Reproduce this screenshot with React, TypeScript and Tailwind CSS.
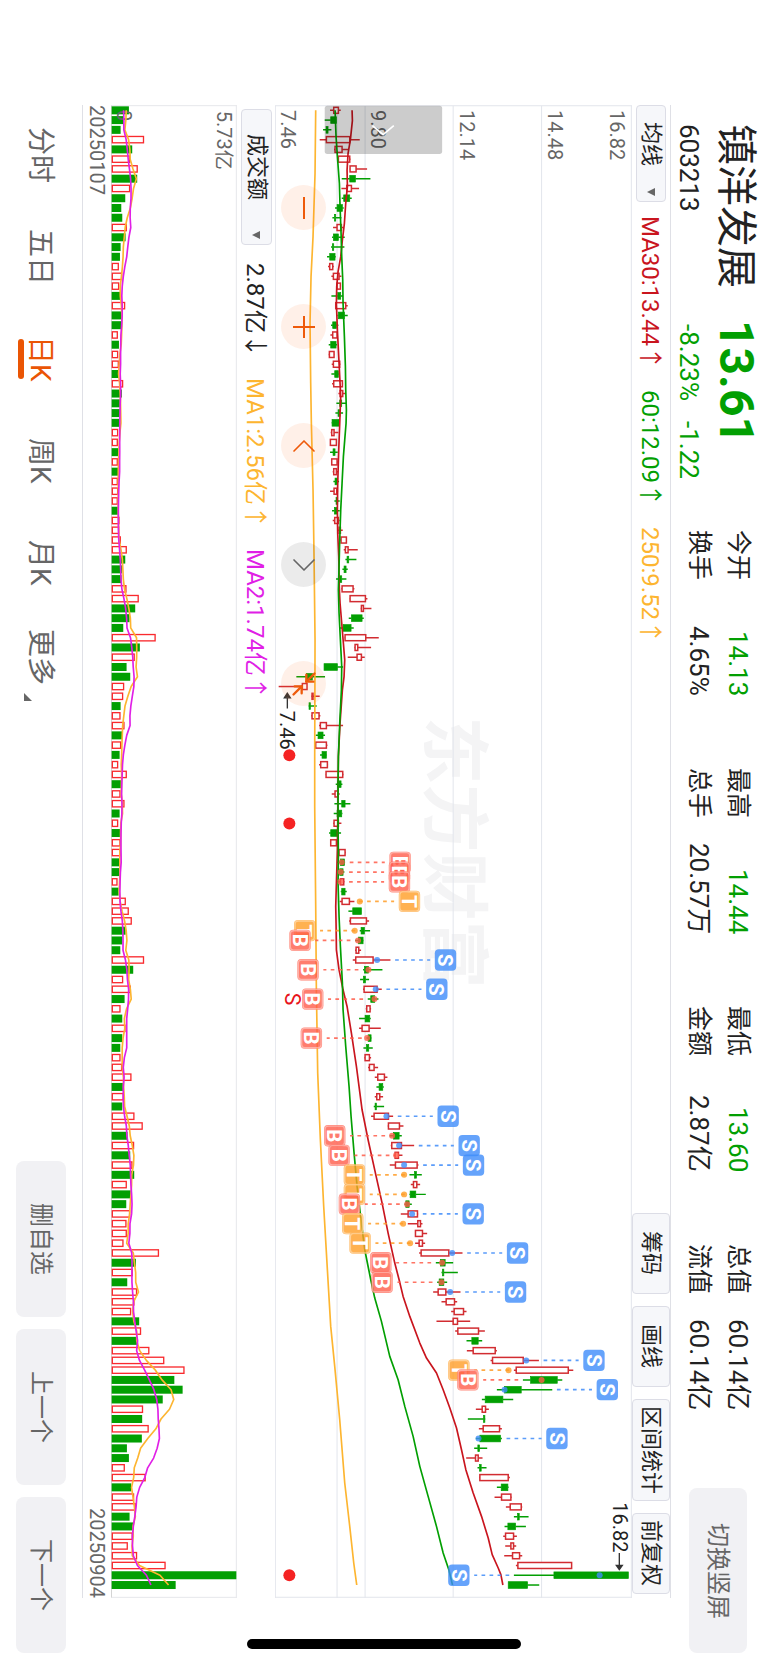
import { useState } from 'react';
import { ChevronDown, ChevronUp, Minimize2 } from 'lucide-react';

type Side = 'B' | 'S' | 'T';

// low, body start, body end, high - negative low marks a falling day
type Candle = [number, number, number, number];

const UP = '#d22c31';
const DOWN = '#029f02';
const ORANGE = '#fdb530';
const MAGENTA = '#e01fe6';

const PITCH = 29.305;
const rowAt = (i: number) => 61 + PITCH * i;

const CANDLES: Candle[] = [
  [211, 222, 236, 243], [-195, 213, 230, 230], [-190, 199, 205, 215], [180, 200, 270, 300],
  [223, 226, 247, 267], [235, 236, 270, 272], [270, 271, 289, 322], [-246, 270, 287, 332],
  [245, 261, 275, 298], [-246, 252, 270, 276], [-226, 232, 248, 252], [-218, 224, 228, 245],
  [220, 232, 245, 250], [-217, 221, 236, 255], [-214, 218, 222, 254], [-202, 210, 226, 228],
  [205, 210, 219, 222], [215, 221, 238, 245], [230, 232, 242, 244], [-215, 234, 243, 250],
  [226, 228, 258, 264], [-233, 236, 254, 264], [-214, 219, 230, 236], [212, 219, 232, 234],
  [-207, 213, 229, 232], [207, 209, 223, 224], [216, 221, 240, 242], [-215, 225, 236, 240],
  [217, 222, 248, 250], [236, 241, 249, 258], [-230, 240, 246, 260], [-227, 235, 241, 250],
  [-216, 217, 238, 239], [213, 216, 223, 236], [211, 212, 230, 231], [-211, 220, 226, 234],
  [214, 216, 232, 234], [219, 222, 230, 235], [-221, 226, 234, 238], [211, 223, 231, 235],
  [-224, 229, 234, 240], [-217, 224, 232, 240], [219, 225, 236, 240], [234, 238, 242, 249],
  [240, 244, 260, 261], [252, 257, 265, 294], [-257, 262, 267, 290], [-248, 253, 259, 264],
  [-229, 240, 246, 260], [245, 247, 280, 284], [270, 271, 317, 323], [303, 305, 311, 335],
  [-267, 275, 307, 312], [-240, 250, 274, 282], [255, 256, 318, 357], [284, 286, 294, 334],
  [264, 292, 305, 315], [-193, 193, 233, 250], [-110, 140, 158, 196], [57, 128, 142, 142],
  [155, 157, 160, 180], [-147, 148, 152, 171], [155, 157, 178, 182], [178, 182, 200, 250],
  [-168, 175, 190, 196], [167, 168, 200, 203], [-181, 187, 200, 201], [178, 183, 203, 205],
  [198, 199, 249, 251], [-228, 234, 244, 248], [216, 226, 234, 240], [-224, 246, 256, 272],
  [-222, 232, 246, 248], [221, 223, 236, 245], [-208, 213, 232, 244], [211, 213, 230, 232],
  [236, 238, 256, 258], [-232, 242, 254, 256], [-235, 240, 250, 254], [232, 242, 252, 254],
  [-243, 246, 256, 261], [240, 247, 269, 284], [-266, 279, 305, 305], [268, 272, 320, 328],
  [-300, 304, 314, 331], [-286, 296, 310, 311], [286, 289, 297, 304], [279, 288, 340, 392],
  [-310, 314, 326, 368], [-301, 311, 317, 328], [310, 313, 352, 366], [-324, 333, 345, 356],
  [318, 321, 331, 334], [-298, 316, 330, 333], [298, 307, 328, 363], [-320, 325, 334, 335],
  [-311, 320, 327, 339], [314, 316, 329, 334], [325, 329, 343, 355], [345, 354, 374, 383],
  [-350, 358, 369, 372], [345, 351, 360, 370], [-342, 346, 350, 373], [334, 343, 386, 400],
  [384, 386, 419, 431], [-390, 401, 418, 426], [393, 396, 425, 463], [403, 406, 416, 428],
  [390, 407, 472, 476], [-449, 464, 470, 486], [453, 461, 471, 481], [-449, 451, 468, 498],
  [-434, 438, 448, 456], [423, 445, 473, 475], [444, 474, 482, 488], [466, 467, 488, 502],
  [466, 478, 488, 496], [478, 484, 567, 608], [-528, 542, 556, 580], [-545, 548, 552, 594],
  [-532, 538, 552, 562], [520, 535, 558, 602], [545, 559, 584, 592], [574, 583, 611, 620],
  [530, 580, 593, 631], [586, 594, 656, 675], [-620, 636, 655, 667], [621, 640, 706, 711],
  [692, 698, 790, 837], [762, 769, 925, 940], [-789, 812, 892, 907], [-711, 734, 784, 877],
  [-666, 676, 729, 760], [648, 667, 677, 687], [-624, 671, 675, 676], [657, 670, 719, 726],
  [-648, 660, 722, 726], [-643, 654, 659, 682], [619, 647, 655, 668], [-653, 659, 664, 680],
  [658, 660, 745, 750], [-711, 724, 744, 746], [704, 725, 753, 755], [738, 751, 784, 787],
  [-762, 773, 778, 806], [-734, 744, 767, 798], [730, 737, 761, 771], [736, 753, 761, 769],
  [733, 758, 779, 787], [768, 774, 935, 936], [-762, 882, 1105, 1105], [-745, 745, 803, 838],
];

// day, side, dot position, badge above (1) or below (-1) the candle
const MARKERS: [number, Side, number, 1 | -1][] = [
  [77, 'B', 246, 1], [78, 'B', 243, 1], [79, 'B', 242, 1], [81, 'T', 300, 1],
  [84, 'T', 285, -1], [85, 'B', 295, -1], [87, 'S', 352, 1], [88, 'B', 326, -1],
  [90, 'S', 348, 1], [91, 'B', 344, -1], [95, 'B', 322, -1], [103, 'S', 380, 1],
  [105, 'B', 397, -1], [106, 'S', 418, 1], [107, 'B', 409, -1], [108, 'S', 433, 1],
  [109, 'T', 433, -1], [111, 'T', 433, -1], [112, 'B', 442, -1], [113, 'S', 457, 1],
  [114, 'T', 430, -1], [116, 'T', 451, -1], [117, 'S', 577, 1], [118, 'B', 547, -1],
  [120, 'B', 545, -1], [121, 'S', 571, 1], [128, 'S', 799, 1], [129, 'T', 746, -1],
  [130, 'B', 845, -1], [131, 'S', 734, 1], [136, 'S', 656, 1], [150, 'S', 1019, -1],
];

const SIDE_COLOR: Record<Side, string> = { B: '#ff5c4a', S: '#3f8cfa', T: '#ff9d26' };

// turnover per day, negative for a falling day
const VOLUMES = [
  -52, -36, -27, 98, -62, 56, 79, -77, 56, -41, -29, -32, 46, -42, -27, -25, 22, 32, 23, -28,
  41, -31, -31, 19, -22, 20, 22, -21, 35, -31, -25, -25, -24, 20, 19, -21, 19, -21, 19, 20,
  19, -20, 24, 23, 28, 46, -41, -31, -30, 45, 82, -71, -54, -35, 133, -85, 70, -45, -56, 38,
  35, -27, 27, 39, -32, 29, -24, 20, 46, -28, 27, 39, -24, 20, -25, 27, 27, -24, -23, 18,
  -21, 43, 52, 61, -42, -32, -26, 98, -65, 35, 58, -39, 27, -32, 42, -32, -26, 27, 32, 60,
  -34, 37, -32, 69, 94, -48, 68, -56, 63, -68, 46, -58, -44, 56, 45, 46, 36, 143, -73, 64,
  -47, 77, 69, 59, -83, 89, -78, 114, 159, 220, -189, -214, -154, 95, -92, 112, -91, -46, -52, 40,
  103, -59, 68, 73, -54, -67, 64, 49, 77, 163, -376, -193,
];
const EARLIER = [28, 28, 28, 28, 28, 42, 42, 42, 42];

const average = (days: number) => {
  const all = [...EARLIER, ...VOLUMES.map(Math.abs)];
  return VOLUMES.map((_, i) => {
    const end = i + EARLIER.length + 1;
    const sum = all.slice(end - days, end).reduce((a, b) => a + b, 0);
    return `${334 + sum / days},${rowAt(i)}`;
  }).join(' ');
};

const MA30 =
  '277,61 278,92 272,149 265,190 262,240 263,290 258,340 254,400 248,450 243,500 235,545 231,590 230,640 233,720 237,800 241,880 243,920 240,1000 237,1080 234,1180 233,1260 234,1330 237,1400 238,1450 239,1500 241,1540 246,1600 251,1660 255,1710 253,1760 248,1800 241,1900 236,2000 235,2100 234,2200 233,2280 230,2380 228,2450 229,2500 230,2580 238,2640 250,2700 262,2750 275,2830 290,2930 307,3060 325,3150 347,3250 367,3340 385,3430 405,3520 418,3570 430,3620 450,3680 480,3760 500,3805 530,3850 550,3900 570,3955 590,4015 605,4080 618,4140 640,4210 665,4280 685,4345 697,4395 715,4435 723,4455 729,4486';
const MA60 =
  '226,61 229,140 233,200 239,280 241,350 244,430 246,500 249,570 250,640 254,740 257,830 258,900 260,960 259,1000 255,1050 251,1100 247,1180 243,1260 240,1350 238,1430 236,1500 238,1570 242,1650 246,1730 245,1800 240,1900 236,2000 235,2080 235,2200 236,2300 235,2380 238,2480 242,2570 248,2680 250,2760 258,2870 268,2990 274,3080 283,3190 292,3290 305,3400 315,3480 327,3540 333,3570 345,3625 365,3695 390,3800 415,3870 435,3950 460,4040 480,4130 505,4220 530,4310 550,4390 567,4440 578,4486';
const MA250 =
  '168,61 166,250 160,440 154,560 151,700 153,880 155,1000 160,1200 163,1400 166,1650 165,2000 165,2150 168,2450 170,2700 174,2950 182,3150 192,3350 203,3540 213,3710 225,3830 240,3990 255,4180 270,4310 282,4420 291,4486';

const STATS = [
  [['今开', '14.13', true], ['换手', '4.65%', false]],
  [['最高', '14.44', true], ['总手', '20.57万', false]],
  [['最低', '13.60', true], ['金额', '2.87亿', false]],
  [['总值', '60.14亿', false], ['流值', '60.14亿', false]],
] as const;

const TABS = ['分时', '五日', '日K', '周K', '月K', '更多'];
const TOOLS = ['筹码', '画线', '区间统计', '前复权'];

function ChartText({ x, y, size = 60, fill = '#666', children, ...rest }: {
  x: number;
  y: number;
  size?: number;
  fill?: string;
  children: string;
  fontWeight?: number;
  textAnchor?: 'start' | 'middle';
}) {
  return (
    <text x={x} y={y} fontSize={size} fill={fill} transform={`rotate(90 ${x} ${y})`} {...rest}>
      {children}
    </text>
  );
}

function Header() {
  return (
    <header className="flex w-[98px] items-center pt-[124px] pb-3">
      <div className="flex h-[168px] flex-col gap-2 pr-2">
        <h1 className="text-[41px] leading-[46px]">镇洋发展</h1>
        <span className="text-[26px] leading-8">603213</span>
      </div>
      <div className="mt-7 flex h-[162px] flex-col gap-2 pr-2 text-[#029f02]">
        <strong className="text-[48px] leading-[46px] font-bold">13.61</strong>
        <div className="flex gap-5 pt-1 text-[26px] leading-8">
          <span>-8.23%</span>
          <span>-1.22</span>
        </div>
      </div>
      <div className="mt-12 flex gap-[72px] pr-1">
        {STATS.map((column, i) => (
          <dl key={i} className="flex h-[166px] flex-col gap-[7px] text-[26px] leading-8">
            {column.map(([label, value, down]) => (
              <div key={label} className="flex justify-between">
                <dt className="text-[25px] leading-8">{label}</dt>
                <dd className={down ? 'text-[#029f02]' : ''}>{value}</dd>
              </div>
            ))}
          </dl>
        ))}
      </div>
      <button className="mt-auto mr-1 flex h-[165px] w-[58px] items-center justify-center rounded-lg bg-[#f1f1f4] text-2xl text-[#666]">
        切换竖屏
      </button>
    </header>
  );
}

function Picker({ label, className, pad }: { label: string; className: string; pad: string }) {
  return (
    <div className={`relative ${className}`}>
      <select
        aria-label={label}
        className={`h-full w-full appearance-none rounded-sm border border-[#dcdde6] bg-[#f6f7fa] text-[22px] leading-7 [text-orientation:sideways] ${pad}`}
      >
        <option>{label}</option>
      </select>
      <svg viewBox="0 0 8 8" className="pointer-events-none absolute bottom-[6px] left-[11px] size-2">
        <path d="M8 0v8L0 4z" fill="#666" />
      </svg>
    </div>
  );
}

function PriceChart() {
  return (
    <svg
      viewBox="46 45 1070 4480"
      preserveAspectRatio="none"
      className="block h-full w-full [writing-mode:horizontal-tb]"
    >
      <ChartText x={510} y={1880} size={204} fill="#f4f4f5" fontWeight={700}>东方财富</ChartText>
      <g stroke="#e2e5ec" strokeWidth="3">
        {[47, 232, 316, 580, 845, 1114].map((x) => (
          <line key={x} x1={x} x2={x} y1="47" y2="4524" />
        ))}
        <path d="M46 47H1116M46 4523H1116" />
      </g>

      <ChartText x={65} y={60}>7.46</ChartText>
      <ChartText x={333} y={60}>9.80</ChartText>
      <ChartText x={600} y={60}>12.14</ChartText>
      <ChartText x={865} y={60}>14.48</ChartText>
      <ChartText x={1050} y={60}>16.82</ChartText>

      {CANDLES.map(([rawLow, from, to, high], i) => {
        const down = rawLow < 0;
        const low = Math.abs(rawLow);
        const y = rowAt(i);
        const color = down ? DOWN : UP;
        return (
          <g key={i} stroke={color} strokeWidth="4.5">
            <path d={`M${low} ${y}H${from}M${to} ${y}H${high}`} />
            <rect
              x={from}
              y={y - (down ? 10 : 9)}
              width={Math.max(to - from, 1)}
              height={down ? 20 : 18}
              fill={down ? color : '#fff'}
              strokeWidth={down ? 2 : 4.5}
            />
          </g>
        );
      })}

      <g fill="none" strokeWidth="5" strokeLinejoin="round">
        <polyline points={MA250} stroke={ORANGE} />
        <polyline points={MA30} stroke="#c9151e" />
        <polyline points={MA60} stroke={DOWN} />
      </g>

      {MARKERS.map(([day, side, dot, dir]) => {
        const y = rowAt(day);
        const edge = dir > 0 ? CANDLES[day][3] : Math.abs(CANDLES[day][0]);
        const x = edge + dir * 165;
        const color = SIDE_COLOR[side];
        return (
          <g key={day}>
            <circle cx={dot} cy={y} r="9" fill={color} opacity="0.8" />
            <line
              x1={edge + dir * 14}
              x2={x - dir * 46}
              y1={y}
              y2={y}
              stroke={color}
              strokeWidth="5"
              strokeDasharray="11 13"
              opacity="0.85"
            />
            <rect x={x - 32} y={y - 32} width="64" height="64" rx="12" fill={color} opacity="0.8" />
            {side !== 'S' && (
              <rect x={x - 29} y={y - 29} width="58" height="58" rx="9" fill="none" stroke="#fff" strokeWidth="4" opacity="0.4" />
            )}
            <ChartText x={x - 22} y={y} size={62} fill="#fff" fontWeight={700} textAnchor="middle">
              {side}
            </ChartText>
          </g>
        );
      })}

      <g fill="#f52323">
        <circle cx="89" cy="1996" r="18" />
        <circle cx="89" cy="2201" r="18" />
        <circle cx="89" cy="4457" r="18" />
      </g>
      <ChartText x={75} y={2728} size={64} fill="#e8131b" textAnchor="middle">S</ChartText>

      <ChartText x={62} y={1863} fill="#222">7.46</ChartText>
      <ChartText x={1058} y={4238} fill="#222">16.82</ChartText>
      <g stroke="#333" strokeWidth="4" fill="#333">
        <path d="M83 1856V1824M83 1810l-9 14h18z" />
        <path d="M1078 4390V4430M1078 4440l-9 -13h18z" />
      </g>

      <rect x="195" y="47" width="352" height="145" rx="8" fill="#000" opacity="0.2" />
      <path d="M338 107l32 27l32 -27" fill="none" stroke="#fff" strokeWidth="5" />
    </svg>
  );
}

function ChartControls() {
  const round = 'flex size-[45px] items-center justify-center rounded-full';
  const warm = `${round} bg-[#fb6a1c]/10 text-[#ee5a0a]`;
  return (
    <div className="absolute top-20 left-[6px] flex gap-[74px]">
      <button aria-label="缩小" className={warm}>
        <svg viewBox="0 0 22 22" className="size-[22px]">
          <path d="M11 0v22" stroke="currentColor" strokeWidth="2" />
        </svg>
      </button>
      <button aria-label="放大" className={warm}>
        <svg viewBox="0 0 22 22" className="size-[22px]">
          <path d="M11 0v22M0 11h22" stroke="currentColor" strokeWidth="2" />
        </svg>
      </button>
      <button aria-label="向前" className={warm}>
        <ChevronUp size={40} strokeWidth={1} />
      </button>
      <button aria-label="向后" className={`${round} bg-black/8 text-[#666]`}>
        <ChevronDown size={40} strokeWidth={1} />
      </button>
      <button aria-label="收起" className={warm}>
        <Minimize2 size={28} strokeWidth={2} />
      </button>
    </div>
  );
}

function VolumeChart() {
  return (
    <svg
      viewBox="332 45 380 4480"
      preserveAspectRatio="none"
      className="block h-full w-full [writing-mode:horizontal-tb]"
    >
      <path d="M332 47H712M332 4523H712M710 47V4523" stroke="#e6e7eb" strokeWidth="3" fill="none" />
      <path d="M333 47V4523" stroke="#ccc" strokeWidth="3" />
      {VOLUMES.map((volume, i) =>
        volume < 0 ? (
          <rect key={i} x="334" y={rowAt(i) - 12} width={-volume} height="24" fill={DOWN} />
        ) : (
          <rect
            key={i}
            x="336"
            y={rowAt(i) - 9.5}
            width={volume - 4}
            height="19"
            fill="#fff"
            stroke="#f92a2e"
            strokeWidth="4"
          />
        ),
      )}
      <ChartText x={652} y={62}>5.73亿</ChartText>
      <ChartText x={350} y={60}>0</ChartText>
      <g fill="none" strokeWidth="5" strokeLinejoin="round">
        <polyline points={average(5)} stroke={ORANGE} />
        <polyline points={average(10)} stroke={MAGENTA} />
      </g>
    </svg>
  );
}

export default function App() {
  const [period, setPeriod] = useState('日K');

  return (
    <div className="relative flex h-screen w-full flex-col bg-white font-['Roboto','Noto_Sans_CJK_SC',sans-serif] text-[#222] [text-orientation:sideways] [writing-mode:vertical-rl]">
      <Header />

      <main className="flex min-w-0 flex-1 flex-col pt-[105px] pb-[67px]">
        <div className="flex w-[39px] items-center border-r border-[#dfe0e6]">
          <Picker label="均线" className="h-[97px] w-[30px]" pad="pt-4" />
          <div className="mt-[14px] flex gap-5 pr-[2px] text-2xl">
            <span className="text-[#c9151e]">MA30:13.44↑</span>
            <span className="text-[#029f02]">60:12.09↑</span>
            <span className="text-[#fdb530]">250:9.52↑</span>
          </div>
          <div className="mt-auto flex gap-3 self-stretch pb-1">
            {TOOLS.map((tool) => (
              <button
                key={tool}
                className="flex min-h-[81px] items-center justify-center rounded-sm border border-[#dcdde6] bg-[#f6f7fa] px-[6px] text-[22px]"
              >
                {tool}
              </button>
            ))}
          </div>
        </div>

        <section className="relative min-w-0 flex-1">
          <PriceChart />
          <ChartControls />
        </section>

        <div className="flex w-[38px] items-center pt-1">
          <Picker label="成交额" className="h-[136px] w-[31px]" pad="pt-6" />
          <div className="mt-[18px] flex gap-5 pr-[2px] text-2xl">
            <span>2.87亿↓</span>
            <span className="text-[#fdb530]">MA1:2.56亿↑</span>
            <span className="text-[#e01fe6]">MA2:1.74亿↑</span>
          </div>
        </div>

        <section className="w-[126px]">
          <VolumeChart />
        </section>

        <div className="flex w-[29px] items-center justify-between border-l border-[#dfe0e6] text-xl text-[#666]">
          <time>20250107</time>
          <time>20250904</time>
        </div>
      </main>

      <footer className="flex w-[82px] items-center justify-between pt-[104px] pb-3">
        <nav className="flex self-stretch">
          {TABS.map((tab) => (
            <button
              key={tab}
              onClick={() => setPeriod(tab)}
              className={`flex h-[102px] flex-col items-center pr-[26px] text-[28px] leading-8 ${
                tab === period ? 'text-[#ea5504]' : 'text-[#666]'
              }`}
            >
              <span className="flex items-end gap-2">
                {tab}
                {tab === '更多' && (
                  <svg viewBox="0 0 8 8" className="size-2">
                    <path d="M0 0v8h8z" fill="currentColor" />
                  </svg>
                )}
              </span>
              {tab === period && <span className="h-10 w-[6px] rounded-full bg-[#ea5504]" />}
            </button>
          ))}
        </nav>
        <div className="flex gap-3">
          {['删自选', '上一个', '下一个'].map((action) => (
            <button
              key={action}
              className="flex h-[156px] w-[50px] items-center justify-center rounded-lg bg-[#f1f1f4] text-2xl text-[#666]"
            >
              {action}
            </button>
          ))}
        </div>
      </footer>

      <div className="absolute bottom-4 left-[247px] h-[10px] w-[274px] rounded-full bg-black" />
    </div>
  );
}
